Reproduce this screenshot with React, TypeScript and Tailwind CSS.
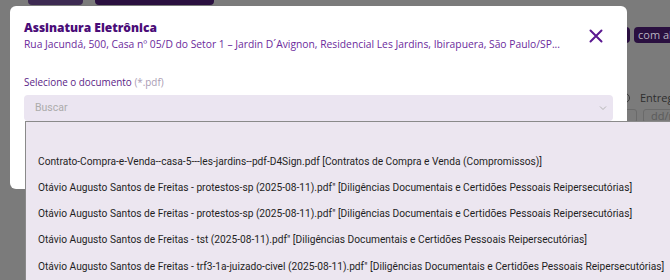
import React from "react";

const items = [
  "Contrato-Compra-e-Venda--casa-5---les-jardins--pdf-D4Sign.pdf [Contratos de Compra e Venda (Compromissos)]",
  "Otávio Augusto Santos de Freitas - protestos-sp (2025-08-11).pdf\" [Diligências Documentais e Certidões Pessoais Reipersecutórias]",
  "Otávio Augusto Santos de Freitas - protestos-sp (2025-08-11).pdf\" [Diligências Documentais e Certidões Pessoais Reipersecutórias]",
  "Otávio Augusto Santos de Freitas - tst (2025-08-11).pdf\" [Diligências Documentais e Certidões Pessoais Reipersecutórias]",
  "Otávio Augusto Santos de Freitas - trf3-1a-juizado-civel (2025-08-11).pdf\" [Diligências Documentais e Certidões Pessoais Reipersecutórias]",
];

export default function App() {
  return (
    <div className="relative w-[670px] h-[280px] overflow-hidden bg-[#7b7b7b] font-['Open_Sans',sans-serif]">
      {/* background page, dimmed */}
      <div className="flex flex-col">
        <div className="flex gap-[12px] pl-[28px] -mt-[8px]">
          <div className="w-[55px] h-[13px] rounded-[4px] bg-[#3d2a52]" />
          <div className="w-[119px] h-[13px] rounded-[4px] bg-[#2a1040]" />
        </div>
        <div className="flex gap-[4px] pl-[610px] mt-[22px]">
          <div className="w-[20px] h-[16px] shrink-0 rounded-[4px] bg-[#2a1040]" />
          <div className="h-[16px] shrink-0 pl-[4px] pr-[10px] rounded-[4px] bg-[#2a1040] text-[11px] leading-[16px] text-[#b9b3c0] whitespace-nowrap">
            com alertas
          </div>
        </div>
        <div className="flex items-center gap-[10px] pl-[620px] mt-[48px]">
          <div className="w-[10px] h-[10px] shrink-0 rounded-full border border-[#3a3a3a]" />
          <div className="text-[11px] leading-[14px] text-[#2e2e2e] whitespace-nowrap">Entrega</div>
        </div>
        <div className="flex gap-[6px] pl-[600px] mt-[4px]">
          <div className="w-[37px] h-[14px] shrink-0 rounded-[3px] border border-[#6a6a6a]" />
          <div className="w-[60px] h-[14px] shrink-0 rounded-[3px] border border-[#6a6a6a] pl-[7px] text-[11px] leading-[12px] text-[#5a5a5a]">dd/mm</div>
        </div>
      </div>

      {/* modal */}
      <div className="absolute left-[10px] top-[6px] w-[617px] h-[183px] rounded-[6px] bg-white">
        <div className="flex items-start justify-between pl-[14px] pr-[24px] pt-[14px]">
          <div className="flex flex-col">
            <div className="text-[12px] leading-[16px] font-extrabold text-[#4a0d78]">Assinatura Eletrônica</div>
            <div className="mt-[1px] text-[10.3px] leading-[14px] text-[#6b2a9c] whitespace-nowrap">
              Rua Jacundá, 500, Casa nº 05/D do Setor 1 – Jardin D´Avignon, Residencial Les Jardins, Ibirapuera, São Paulo/SP...
            </div>
          </div>
          <svg width="14" height="14" viewBox="0 0 14 14" className="mt-[9px]">
            <path d="M1.5 1.5 L12.5 12.5 M12.5 1.5 L1.5 12.5" stroke="#5a1890" strokeWidth="2" strokeLinecap="round" />
          </svg>
        </div>
        <div className="pl-[14px] mt-[24px] text-[9.9px] leading-[14px] text-[#5b2487]">
          Selecione o documento <span className="text-[#a99bb3]">(*.pdf)</span>
        </div>
        <div className="ml-[14px] mt-[6px] w-[589px] h-[26px] rounded-[4px] bg-[#ebe5f1] flex items-center justify-between pl-[11px] pr-[6px]">
          <span className="text-[10.5px] text-[#ababab] font-['Roboto',sans-serif]">Buscar</span>
          <svg width="8" height="6" viewBox="0 0 8 6">
            <path d="M1 1.5 L4 4.5 L7 1.5" stroke="#b4b4b4" strokeWidth="1" fill="none" />
          </svg>
        </div>
      </div>

      {/* dropdown menu */}
      <div className="absolute left-[25px] top-[121px] w-[660px] h-[170px] bg-[#ece6f0] border-t border-l border-[#8a8a8a] font-['Roboto',sans-serif]">
        <div className="flex flex-col pt-[26px] pl-[12px]">
          {items.map((t, i) => (
            <div key={i} className="h-[26.3px] flex items-center text-[10.2px] text-[#1f1f1f] whitespace-nowrap">
              {t}
            </div>
          ))}
        </div>
      </div>
    </div>
  );
}
